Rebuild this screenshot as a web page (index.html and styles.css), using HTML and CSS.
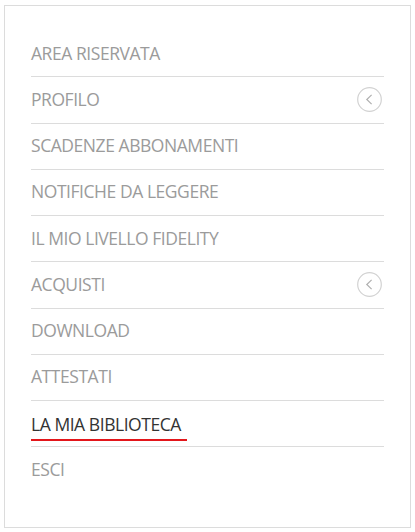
FILE: index.html
```html
<!DOCTYPE html>
<html>
<head>
<meta charset="utf-8">
<link rel="stylesheet" href="styles.css">
</head>
<body>
<nav class="card">
  <ul class="menu">
    <li class="item"><a class="label">AREA RISERVATA</a></li>
    <li class="item"><a class="label">PROFILO</a><span class="toggle"><svg viewBox="0 0 25 25" width="25" height="25"><circle cx="12.5" cy="12.5" r="11.8" fill="none" stroke="#d2d2d2" stroke-width="1.2"/><path d="M14.6 7.9 L9.8 12.5 L14.6 17.1" fill="none" stroke="#b0b0b0" stroke-width="1.2"/></svg></span></li>
    <li class="item"><a class="label">SCADENZE ABBONAMENTI</a></li>
    <li class="item"><a class="label">NOTIFICHE DA LEGGERE</a></li>
    <li class="item"><a class="label">IL MIO LIVELLO FIDELITY</a></li>
    <li class="item"><a class="label">ACQUISTI</a><span class="toggle"><svg viewBox="0 0 25 25" width="25" height="25"><circle cx="12.5" cy="12.5" r="11.8" fill="none" stroke="#d2d2d2" stroke-width="1.2"/><path d="M14.6 7.9 L9.8 12.5 L14.6 17.1" fill="none" stroke="#b0b0b0" stroke-width="1.2"/></svg></span></li>
    <li class="item"><a class="label">DOWNLOAD</a></li>
    <li class="item"><a class="label">ATTESTATI</a></li>
    <li class="item"><a class="label active">LA MIA BIBLIOTECA</a></li>
    <li class="item last"><a class="label">ESCI</a></li>
  </ul>
</nav>
</body>
</html>
```
FILE: styles.css
```css
html, body {
  margin: 0;
  padding: 0;
  background: #fff;
}
body {
  padding: 5px 4px;
  font-family: "Open Sans", "Noto Sans", sans-serif;
}
.card {
  box-sizing: border-box;
  width: 407px;
  height: 523px;
  border: 1px solid #dcdcdc;
  padding: 25px 26px 0 26px;
}
.menu {
  list-style: none;
  margin: 0;
  padding: 0;
}
.item {
  box-sizing: border-box;
  height: 46.25px;
  border-bottom: 1px solid #dcdcdc;
  display: flex;
  align-items: center;
  justify-content: space-between;
}
.item.last {
  border-bottom: none;
}
.label {
  font-size: 17.5px;
  color: #9b9b9b;
  letter-spacing: -0.45px;
  text-decoration: none;
  padding-bottom: 2px;
}
.label.active {
  color: #333;
  border-bottom: 2px solid #e3161b;
  padding: 0 6px 3px 0;
  margin-top: 5px;
}
.toggle {
  display: flex;
  width: 25px;
  height: 25px;
  margin-right: 2px;
}
```
